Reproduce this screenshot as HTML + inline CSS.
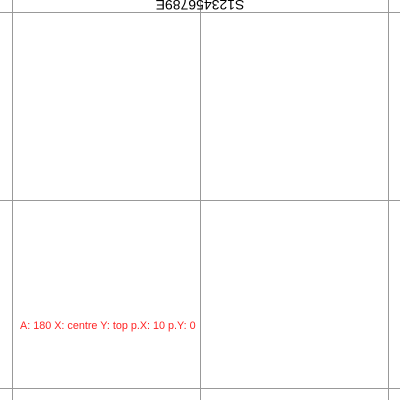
<!DOCTYPE html>
<html><head><style>
body{margin:0;width:400px;height:400px;background:#fff;position:relative;overflow:hidden;font-family:"Liberation Sans",sans-serif}
.v{position:absolute;top:0;width:1px;height:400px;background:#999}
.h{position:absolute;left:0;height:1px;width:400px;background:#999}
.t{position:absolute;left:150px;width:100px;top:-2px;text-align:center;font-size:14px;line-height:14px;transform:rotate(180deg);color:#000}
.r{position:absolute;left:20px;top:320px;font-size:10.8px;color:#f22;white-space:nowrap}
</style></head><body>
<div class="v" style="left:12px"></div><div class="v" style="left:200px"></div><div class="v" style="left:388px"></div>
<div class="h" style="top:12px"></div><div class="h" style="top:200px"></div><div class="h" style="top:388px"></div>
<div class="t">S123456789E</div>
<div class="r">A: 180 X: centre Y: top p.X: 10 p.Y: 0</div>
</body></html>
